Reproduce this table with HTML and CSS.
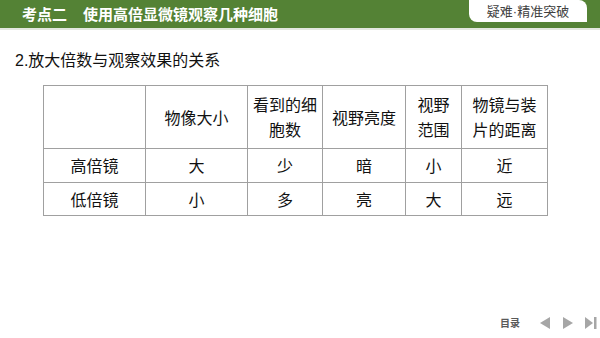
FILE: index.html
```html
<!DOCTYPE html>
<html lang="zh">
<head>
<meta charset="utf-8">
<link rel="stylesheet" href="styles.css">
</head>
<body>
<div class="slide">
  <header class="topbar">
    <div class="title"><span class="kd">考点二</span><span class="tt">使用高倍显微镜观察几种细胞</span></div>
    <div class="tab">疑难<span class="dot">·</span>精准突破</div>
  </header>
  <div class="rule"></div>
  <h2 class="heading">2.放大倍数与观察效果的关系</h2>
  <table class="tbl">
    <colgroup>
      <col style="width:102px"><col style="width:102px"><col style="width:75px"><col style="width:83px"><col style="width:56px"><col style="width:86px">
    </colgroup>
    <tr class="r1">
      <td></td>
      <td>物像大小</td>
      <td>看到的细<br>胞数</td>
      <td>视野亮度</td>
      <td>视野<br>范围</td>
      <td>物镜与装<br>片的距离</td>
    </tr>
    <tr class="r2">
      <td>高倍镜</td><td>大</td><td>少</td><td>暗</td><td>小</td><td>近</td>
    </tr>
    <tr class="r3">
      <td>低倍镜</td><td>小</td><td>多</td><td>亮</td><td>大</td><td>远</td>
    </tr>
  </table>
  <footer class="nav">
    <span class="menu">目录</span>
    <svg class="ic" width="14" height="12" viewBox="0 0 14 12"><polygon points="12,0 12,12 2,6" fill="#a6a6a6"/></svg>
    <svg class="ic" width="14" height="12" viewBox="0 0 14 12"><polygon points="2,0 2,12 12,6" fill="#a6a6a6"/></svg>
    <svg class="ic" width="14" height="12" viewBox="0 0 14 12"><polygon points="1,0 1,12 9,6" fill="#a6a6a6"/><rect x="10" y="0" width="2.5" height="12" fill="#a6a6a6"/></svg>
  </footer>
</div>
</body>
</html>
```
FILE: styles.css
```css
* { box-sizing: border-box; }
html, body { margin: 0; padding: 0; background: #fff; }
body { font-family: "Microsoft YaHei", "Noto Sans CJK SC", sans-serif; }
.slide { width: 600px; height: 338px; position: relative; overflow: hidden; }
.topbar {
  height: 28px; background: #548235;
  display: flex; align-items: flex-start; justify-content: space-between;
  padding-right: 13px;
}
.title { color: #fff; font-weight: bold; font-size: 15px; line-height: 28px; padding-left: 22px; letter-spacing: 0; }
.title .tt { margin-left: 16px; }
.tab {
  width: 118px; height: 22px; background: #fff;
  border-bottom-left-radius: 8px; border-top-right-radius: 8px;
  color: #404040; font-size: 13px; line-height: 22px; text-align: center;
}
.tab .dot { font-family: "Liberation Sans", sans-serif; }
.rule { height: 2px; background: #e3e8df; }
.heading {
  margin: 21px 0 0 15px; font-weight: normal; font-size: 16px; line-height: 20px; color: #111;
  font-family: "Liberation Sans", "Noto Sans CJK SC", sans-serif;
}
.tbl {
  margin: 14px 0 0 43px; border-collapse: collapse; table-layout: fixed;
  font-size: 16px; color: #111; width: 504px;
}
.tbl td {
  border: 1.5px solid #a0a0a0; text-align: center; vertical-align: middle;
  padding: 0; line-height: 25px;
}
.tbl .r1 td { height: 63px; }
.tbl .r2 td { height: 34px; }
.tbl .r3 td { height: 33px; }
.nav {
  position: absolute; left: 500px; top: 315px;
  display: flex; align-items: center; gap: 9px;
}
.menu { font-size: 10px; font-weight: bold; color: #595959; margin-right: 9px; }
.ic { display: block; }
```
